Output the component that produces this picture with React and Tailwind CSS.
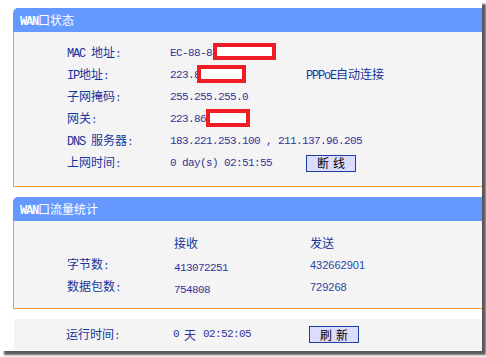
import React from 'react'

const cjk = "font-['Noto_Sans_CJK_SC',sans-serif]"
const mono = "font-['Liberation_Mono','Noto_Sans_CJK_SC',monospace]"

// ascii pieces in the old bitmap look: narrow mono, 6px per char
const A = ({ children, bold, big }) => (
  <span
    className={`${mono} ${big ? 'text-[12px] tracking-[-1.2px]' : 'text-[11px] tracking-[-0.6px]'} ${bold ? 'font-bold' : ''}`}
  >
    {children}
  </span>
)

const Redact = ({ left, width, top = 1, height = 18 }) => (
  <div
    className="absolute border-[4px] border-[#ee1c24] bg-white"
    style={{ left, width, top, height }}
  />
)

function Header({ children }) {
  return (
    <div className={`h-[24px] rounded-tl-[5px] bg-[#6699ff] pl-[7px] text-[12px] leading-[24px] text-white ${cjk}`}>
      {children}
    </div>
  )
}

function Row({ label, value, extra, redact }) {
  return (
    <div className="flex h-[22px] items-center">
      <div className={`w-[103px] shrink-0 text-[12px] text-[#17359b] ${cjk}`}>{label}</div>
      <div className={`relative h-[22px] w-[136px] shrink-0 text-[11px] leading-[22px] tracking-[-0.6px] text-[#333399] ${mono}`}>
        {value}
        {redact}
      </div>
      {extra}
    </div>
  )
}

function Btn({ children }) {
  return (
    <button className={`flex h-[17px] w-[50px] items-center justify-center border border-[#1e3fa0] bg-[#dcdcff] text-[12px] leading-none tracking-[4px] text-black ${cjk}`}>
      <span className="pl-[4px]">{children}</span>
    </button>
  )
}

export default function App() {
  return (
    <div className="h-[357px] w-[486px] bg-white">
      <div className="h-[351px] w-[482px] overflow-hidden bg-white pl-[13px] pt-[8px] shadow-[4px_4px_2px_rgba(0,0,0,0.65)]">
        {/* WAN status */}
        <Header>
          <A bold big>WAN</A>口状态
        </Header>
        <div className="h-[155px] border-b border-l border-[#ff9933] bg-[#f4f4f4] pl-[53px] pt-[10px]">
          <Row
            label={<><A big>MAC</A><span className="ml-[6px]">地址</span><A>:</A></>}
            value="EC-88-8"
            redact={<Redact left={43} width={63} height={17} />}
          />
          <Row
            label={<><A big>IP</A>地址<A>:</A></>}
            value="223.8"
            redact={<Redact left={27} width={49} />}
            extra={
              <div className={`text-[12px] text-[#17359b] ${cjk}`}>
                <A big>PPPoE</A>自动连接
              </div>
            }
          />
          <Row label={<>子网掩码<A>:</A></>} value="255.255.255.0" />
          <Row
            label={<>网关<A>:</A></>}
            value="223.86"
            redact={<Redact left={36} width={44} top={1} height={18} />}
          />
          <Row
            label={<><A big>DNS</A><span className="ml-[6px]">服务器</span><A>:</A></>}
            value={<span className="whitespace-nowrap">183.221.253.100 , 211.137.96.205</span>}
          />
          <Row
            label={<>上网时间<A>:</A></>}
            value="0 day(s) 02:51:55"
            extra={<Btn>断线</Btn>}
          />
        </div>

        {/* WAN traffic */}
        <div className="mt-[10px]">
          <Header>
            <A bold big>WAN</A>口流量统计
          </Header>
          <div className="h-[88px] border-b border-l border-[#ff9933] bg-[#f4f4f4] pl-[53px] pt-[11px]">
            <div className="flex h-[22px] items-center text-[12px] text-[#17359b]">
              <div className="w-[107px]" />
              <div className={`w-[136px] ${cjk}`}>接收</div>
              <div className={cjk}>发送</div>
            </div>
            <div className="flex h-[22px] items-center">
              <div className={`w-[107px] text-[12px] text-[#17359b] ${cjk}`}>字节数<A>:</A></div>
              <div className="w-[136px] text-[#333399]"><A>413072251</A></div>
              <div className="font-['Liberation_Sans',sans-serif] text-[11px] text-[#2b47a6]">432662901</div>
            </div>
            <div className="flex h-[22px] items-center">
              <div className={`w-[107px] text-[12px] text-[#17359b] ${cjk}`}>数据包数<A>:</A></div>
              <div className="w-[136px] text-[#333399]"><A>754808</A></div>
              <div className="font-['Liberation_Sans',sans-serif] text-[11px] text-[#2b47a6]">729268</div>
            </div>
          </div>
        </div>

        {/* uptime */}
        <div className="ml-[1px] mt-[10px] flex h-[31px] items-center bg-[#f4f4f4] pl-[52px]">
          <div className={`w-[107px] text-[12px] text-[#17359b] ${cjk}`}>运行时间<A>:</A></div>
          <div className={`flex w-[136px] items-center text-[12px] text-[#333399] ${cjk}`}>
            <A>0</A>
            <span className="ml-[5px] mr-[7px]">天</span>
            <A>02:52:05</A>
          </div>
          <Btn>刷新</Btn>
        </div>
      </div>
    </div>
  )
}
